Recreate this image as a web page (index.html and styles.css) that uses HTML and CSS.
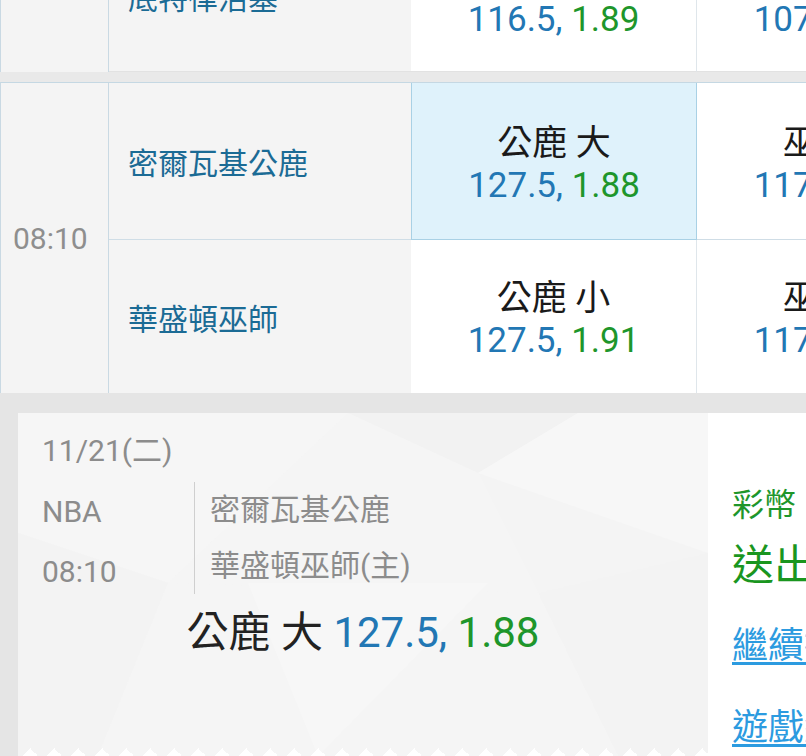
FILE: index.html
```html
<!DOCTYPE html>
<html lang="zh-Hant">
<head>
<meta charset="UTF-8" />
<meta name="viewport" content="width=device-width, initial-scale=1" />
<title>投注單</title>
<link rel="stylesheet" href="styles.css">
</head>
<body>

<!-- Odds board -->
<div class="board">
  <section class="game game-prev">
    <div class="time"></div>
    <div class="team">底特律活塞</div>
    <div class="odd">
      <span class="bet">騎士 小</span>
      <span class="price"><span class="line">116.5,</span> <span class="rate">1.89</span></span>
    </div>
    <div class="odd">
      <span class="bet">活塞 小</span>
      <span class="price"><span class="line">107.5,</span> <span class="rate">1.87</span></span>
    </div>
  </section>

  <section class="game">
    <div class="time">08:10</div>
    <div class="team">密爾瓦基公鹿</div>
    <div class="odd picked">
      <span class="bet">公鹿 大</span>
      <span class="price"><span class="line">127.5,</span> <span class="rate">1.88</span></span>
    </div>
    <div class="odd">
      <span class="bet">巫師 大</span>
      <span class="price"><span class="line">117.5,</span> <span class="rate">1.90</span></span>
    </div>
    <div class="team">華盛頓巫師</div>
    <div class="odd">
      <span class="bet">公鹿 小</span>
      <span class="price"><span class="line">127.5,</span> <span class="rate">1.91</span></span>
    </div>
    <div class="odd">
      <span class="bet">巫師 小</span>
      <span class="price"><span class="line">117.5,</span> <span class="rate">1.89</span></span>
    </div>
  </section>
</div>

<!-- Bet slip -->
<div class="ticket">
  <div class="slip">
    <svg class="slip-bg" viewBox="0 0 690 343" preserveAspectRatio="none" aria-hidden="true">
      <polygon points="0,0 330,0 150,170 0,120" fill="#f6f6f6"/>
      <polygon points="330,0 560,0 460,60" fill="#f2f2f2"/>
      <polygon points="460,60 560,0 690,0 690,140" fill="#f7f7f7"/>
      <polygon points="150,170 330,0 460,60 520,180" fill="#f5f5f5"/>
      <polygon points="520,180 690,140 690,343 600,343" fill="#f3f3f3"/>
      <polygon points="0,120 150,170 80,343 0,343" fill="#f3f3f3"/>
      <polygon points="150,170 520,180 600,343 80,343" fill="#f5f5f5"/>
      <polygon points="230,170 470,170 300,343" fill="#f7f7f7"/>
    </svg>
    <div class="slip-date">11/21(二)</div>
    <div class="slip-meta">
      <div class="slip-league">
        <span>NBA</span>
        <span>08:10</span>
      </div>
      <div class="slip-teams">
        <span>密爾瓦基公鹿</span>
        <span>華盛頓巫師(主)</span>
      </div>
    </div>
    <div class="slip-bet">公鹿 大 <span class="line">127.5,</span> <span class="rate">1.88</span></div>
  </div>
  <div class="panel">
    <div class="coins">彩幣 100</div>
    <div class="sent">送出成功</div>
    <a class="link" href="#">繼續投注</a>
    <a class="link" href="#">遊戲紀錄</a>
  </div>
</div>

</body>
</html>
```
FILE: styles.css
```css
* { box-sizing: border-box; }
html, body {
  margin: 0;
  overflow: hidden;
}
body {
  font-family: Roboto, "Noto Sans CJK TC", sans-serif;
  background: #e5e5e5;
  width: 806px;
  height: 756px;
}

/* Odds board */
.board {
  background: #e9e9e9;
  width: 983px;
}
.game {
  display: grid;
  grid-template-columns: 108px 302px 286px 286px;
  grid-template-rows: 157px 153px;
  border-left: 1px solid #c9d9e3;
  border-top: 1px solid #c5d8e3;
  margin-top: 10px;
}
.game-prev {
  grid-template-rows: 152px;
  margin-top: -80px;
  border-top: none;
}
.time {
  grid-row: 1 / -1;
  background: #f4f4f4;
  border-right: 1px solid #c9d9e3;
  display: flex;
  align-items: center;
  padding-left: 12px;
  font-size: 30px;
  color: #8e8e8e;
}
.team {
  background: #f4f4f4;
  display: flex;
  align-items: center;
  padding-left: 19px;
  font-size: 30px;
  color: #1b6b95;
  border-bottom: 1px solid #cfdde6;
}
.odd {
  background: #fff;
  border-right: 1px solid #dfe6eb;
  border-bottom: 1px solid #cfdde6;
  display: flex;
  flex-direction: column;
  align-items: center;
  justify-content: center;
  padding-top: 7px;
  white-space: nowrap;
}
.game > :nth-last-child(-n+3) { border-bottom: none; }
.game-prev > .team, .game-prev > .odd { border-bottom: 1px solid #e2e2e2; }
.odd.picked {
  background: #dff2fb;
  border: 1px solid #a9d1e5;
  border-top: none;
}
.bet {
  font-size: 35px;
  line-height: 42px;
  color: #1a1a1a;
}
.price {
  font-size: 35px;
  line-height: 42px;
}
.line { color: #2277b4; }
.rate { color: #1e962b; }

/* Bet slip */
.ticket {
  display: flex;
  padding: 20px 0 0 18px;
  height: 363px;
}
.slip {
  position: relative;
  flex: none;
  width: 690px;
  height: 343px;
  background: #f4f4f4;
  padding: 18px 0 0 24px;
  color: #8c8c8c;
  font-size: 30px;
}
.slip-bg {
  position: absolute;
  inset: 0;
  width: 100%;
  height: 100%;
}
.slip::after {
  content: "";
  position: absolute;
  left: 0;
  right: 0;
  bottom: 0;
  height: 8px;
  background: conic-gradient(from 135deg at 50% 0, #fff 90deg, transparent 0);
  background-size: 24px 8px;
}
.slip-date, .slip-meta, .slip-bet { position: relative; }
.slip-date {
  line-height: 40px;
}
.slip-meta {
  display: flex;
  align-items: flex-start;
  margin-top: 11px;
}
.slip-league {
  width: 152px;
  display: flex;
  flex-direction: column;
  line-height: 60px;
}
.slip-teams {
  display: flex;
  flex-direction: column;
  border-left: 1px solid #cfcfcf;
  padding-left: 15px;
  line-height: 56px;
}
.slip-bet {
  margin: 6px 0 0 -24px;
  text-align: center;
  font-size: 42px;
  line-height: 50px;
  color: #222;
  white-space: nowrap;
}

.panel {
  flex: 1;
  background: #fff;
  padding: 70px 0 0 24px;
  white-space: nowrap;
  overflow: hidden;
  display: flex;
  flex-direction: column;
  align-items: flex-start;
}
.coins {
  font-size: 32px;
  line-height: 44px;
  color: #1e962b;
}
.sent {
  margin-top: 11px;
  font-size: 42px;
  line-height: 56px;
  color: #1a961f;
}
.link {
  font-size: 36px;
  line-height: 50px;
  color: #2c9be0;
  text-decoration: underline;
  text-underline-offset: 4px;
  margin-top: 27px;
}
.link + .link { margin-top: 32px; }
```
